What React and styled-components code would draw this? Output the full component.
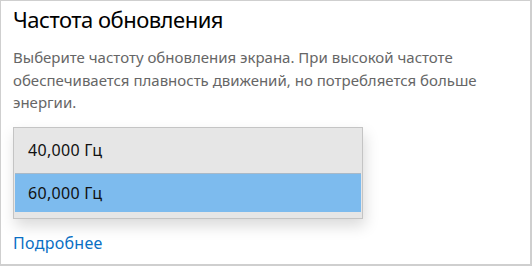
import React from "react";
import styled, { createGlobalStyle } from "styled-components";

const GlobalStyle = createGlobalStyle`
    html, body {
        margin: 0;
        padding: 0;
        background: #fff;
    }
`;

const Panel = styled.div`
    box-sizing: border-box;
    width: 532px;
    height: 266px;
    border: 1px solid #cfcfcf;
    border-right-width: 2px;
    border-bottom-width: 2px;
    padding: 4px 12px 0 12px;
    font-family: "Noto Sans", "Open Sans", sans-serif;
    background: #fff;
    overflow: hidden;
`;

const Title = styled.h1`
    margin: 0;
    font-size: 22px;
    font-weight: 400;
    letter-spacing: -0.5px;
    line-height: 28px;
    color: #000;
`;

const Description = styled.p`
    margin: 13px 0 0 0;
    font-size: 15px;
    line-height: 22.5px;
    color: #666;
`;

const Dropdown = styled.ul`
    list-style: none;
    margin: 13px 0 0 0;
    padding: 0 1px 6px 1px;
    width: 350px;
    box-sizing: border-box;
    background: #e6e6e6;
    border: 1px solid #c4c4c4;
    box-shadow: 2px 7px 14px rgba(0, 0, 0, 0.15);
`;

const Option = styled.li`
    height: ${(props) => (props.selected ? "38px" : "45px")};
    display: flex;
    align-items: center;
    padding-left: 13px;
    font-size: 16px;
    letter-spacing: 0.3px;
    color: #111;
    background: ${(props) => (props.selected ? "#7dbbee" : "transparent")};
    border-top: ${(props) => (props.selected ? "1px solid #a9b9c8" : "none")};
`;

const MoreLink = styled.a`
    display: inline-block;
    margin-top: 13px;
    font-size: 16px;
    letter-spacing: 0.3px;
    color: #0a6fc4;
    text-decoration: none;
`;

const App = () => {
    return (
        <>
            <GlobalStyle />
            <Panel>
                <Title>Частота обновления</Title>
                <Description>
                    Выберите частоту обновления экрана. При высокой частоте
                    обеспечивается плавность движений, но потребляется больше
                    энергии.
                </Description>
                <Dropdown>
                    <Option>40,000 Гц</Option>
                    <Option selected>60,000 Гц</Option>
                </Dropdown>
                <MoreLink href="#">Подробнее</MoreLink>
            </Panel>
        </>
    );
};

export default App;
